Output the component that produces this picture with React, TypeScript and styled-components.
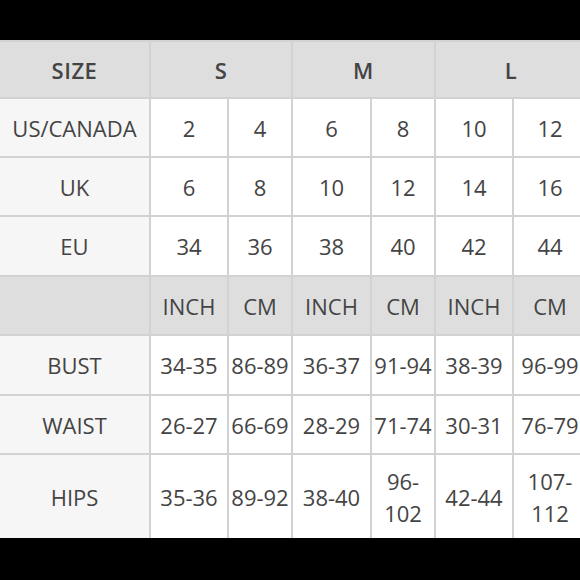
import React from 'react';
import styled, { createGlobalStyle } from 'styled-components';

const GlobalStyle = createGlobalStyle`
  html, body {
    margin: 0;
    padding: 0;
    background: #000;
  }
  body {
    font-family: "Open Sans", "Noto Sans", sans-serif;
  }
`;

const Frame = styled.div`
  width: 580px;
  height: 580px;
  overflow: hidden;
  background: #000;
  padding-top: 40px;
  box-sizing: border-box;
`;

const Grid = styled.div`
  display: grid;
  width: 586px;
  grid-template-columns: 149px 76px 62px 77px 62px 76px 72px;
  grid-template-rows: 55px 57px 57px 58px 57px 58px 57px 83px;
  gap: 2px;
  padding-top: 2px;
  background: #d2d2d2;
`;

type Tone = 'head' | 'label' | 'data';

const tones: Record<Tone, string> = {
  head: '#dedede',
  label: '#f6f6f6',
  data: '#ffffff',
};

const Cell = styled.div<{ $tone: Tone; $span?: number; $bold?: boolean }>`
  display: flex;
  align-items: center;
  justify-content: center;
  text-align: center;
  background: ${(p) => tones[p.$tone]};
  grid-column: ${(p) => (p.$span ? `span ${p.$span}` : 'auto')};
  color: #444;
  font-size: 22px;
  font-weight: ${(p) => (p.$bold ? 600 : 400)};
  letter-spacing: ${(p) => (p.$bold ? '0.5px' : '0')};
  line-height: 32px;
  padding: 0;
  overflow-wrap: break-word;
`;

const sizeRows: [string, string[]][] = [
  ['US/CANADA', ['2', '4', '6', '8', '10', '12']],
  ['UK', ['6', '8', '10', '12', '14', '16']],
  ['EU', ['34', '36', '38', '40', '42', '44']],
];

const bodyRows: [string, string[]][] = [
  ['BUST', ['34-35', '86-89', '36-37', '91-94', '38-39', '96-99']],
  ['WAIST', ['26-27', '66-69', '28-29', '71-74', '30-31', '76-79']],
  ['HIPS', ['35-36', '89-92', '38-40', '96-102', '42-44', '107-112']],
];

function Row({ label, values }: { label: string; values: string[] }) {
  return (
    <>
      <Cell $tone='label'>{label}</Cell>
      {values.map((v, i) => (
        <Cell key={i} $tone='data'>{v}</Cell>
      ))}
    </>
  );
}

export default function App() {
  return (
    <Frame>
      <GlobalStyle />
      <Grid>
        <Cell $tone='head' $bold>SIZE</Cell>
        <Cell $tone='head' $bold $span={2}>S</Cell>
        <Cell $tone='head' $bold $span={2}>M</Cell>
        <Cell $tone='head' $bold $span={2}>L</Cell>

        {sizeRows.map(([l, v]) => (
          <Row key={l} label={l} values={v} />
        ))}

        <Cell $tone='head' />
        {['INCH', 'CM', 'INCH', 'CM', 'INCH', 'CM'].map((u, i) => (
          <Cell key={i} $tone='head'>{u}</Cell>
        ))}

        {bodyRows.map(([l, v]) => (
          <Row key={l} label={l} values={v} />
        ))}
      </Grid>
    </Frame>
  );
}
